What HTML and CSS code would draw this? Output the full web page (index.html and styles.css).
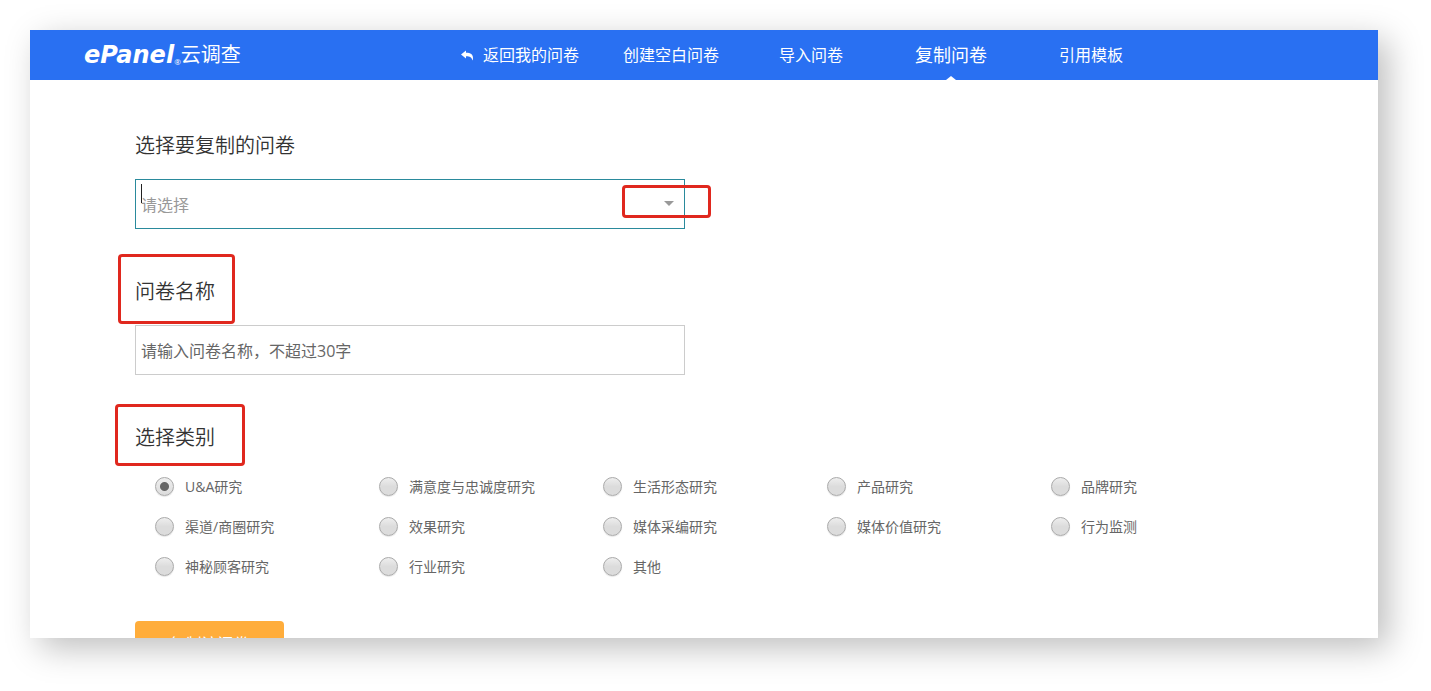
FILE: index.html
```html
<!DOCTYPE html>
<html lang="zh-CN">
<head>
<meta charset="utf-8">
<title>复制问卷 - ePanel云调查</title>
<link rel="stylesheet" href="styles.css">
</head>
<body>
<div class="window">
  <header class="topbar">
    <a class="logo" href="#"><span class="logo-en">ePanel</span><span class="logo-reg">®</span><span class="logo-cn">云调查</span></a>
    <nav class="nav">
      <a class="nav-item nav-back" href="#"><svg class="back-icon" viewBox="0 0 13 11" aria-hidden="true"><path d="M0 4.500 5 .5v2.300c4.700 0 7 1.700 7 5.200 0 1-.2 1.900-.6 2.500C10.800 7.500 9 6.200 5 6.200v2.300z"/></svg>返回我的问卷</a>
      <a class="nav-item" href="#">创建空白问卷</a>
      <a class="nav-item" href="#">导入问卷</a>
      <a class="nav-item nav-active" href="#">复制问卷</a>
      <a class="nav-item" href="#">引用模板</a>
    </nav>
  </header>
  <form class="form">
    <div class="field">
      <label class="title" for="source">选择要复制的问卷</label>
      <div class="select-box">
        <select class="control select" id="source"><option>请选择</option></select>
        <span class="caret"></span>
        <span class="arrow"></span>
        <span class="mark mark-arrow"></span>
      </div>
    </div>
    <div class="field">
      <label class="title" for="name">问卷名称<span class="mark mark-name"></span></label>
      <input class="control" id="name" type="text" placeholder="请输入问卷名称，不超过30字">
    </div>
    <fieldset class="field category">
      <legend class="title">选择类别<span class="mark mark-category"></span></legend>
      <div class="options">
        <label class="option"><input class="radio" type="radio" name="category" checked>U&amp;A研究</label>
        <label class="option"><input class="radio" type="radio" name="category">满意度与忠诚度研究</label>
        <label class="option"><input class="radio" type="radio" name="category">生活形态研究</label>
        <label class="option"><input class="radio" type="radio" name="category">产品研究</label>
        <label class="option"><input class="radio" type="radio" name="category">品牌研究</label>
        <label class="option"><input class="radio" type="radio" name="category">渠道/商圈研究</label>
        <label class="option"><input class="radio" type="radio" name="category">效果研究</label>
        <label class="option"><input class="radio" type="radio" name="category">媒体采编研究</label>
        <label class="option"><input class="radio" type="radio" name="category">媒体价值研究</label>
        <label class="option"><input class="radio" type="radio" name="category">行为监测</label>
        <label class="option"><input class="radio" type="radio" name="category">神秘顾客研究</label>
        <label class="option"><input class="radio" type="radio" name="category">行业研究</label>
        <label class="option"><input class="radio" type="radio" name="category">其他</label>
      </div>
    </fieldset>
    <button class="submit" type="button">复制该问卷</button>
  </form>
</div>
</body>
</html>
```
FILE: styles.css
```css
* {
  box-sizing: border-box;
}

body {
  display: flex;
  height: 100vh;
  margin: 0;
  padding: 30px 53px 53px 30px;
  background: #fff;
  color: #333;
  font-family: "Open Sans", "Noto Sans CJK SC", sans-serif;
  font-size: 16px;
}

.window {
  flex: 1;
  overflow: hidden;
  background: #fff;
  box-shadow: 10px 10px 32px rgba(0, 0, 0, 0.26);
}

.topbar {
  display: flex;
  height: 50px;
  padding-left: 54px;
  background: #2970f2;
}

.logo {
  display: flex;
  align-items: center;
  width: 377px;
  color: #fff;
  line-height: 50px;
  text-decoration: none;
}

.logo-en {
  font-family: "DejaVu Sans", sans-serif;
  font-size: 24px;
  font-style: italic;
  font-weight: 700;
}

.logo-reg {
  align-self: flex-end;
  font-size: 8px;
  line-height: 36px;
}

.logo-cn {
  font-size: 20px;
}

.nav {
  display: flex;
}

.nav-item {
  position: relative;
  width: 140px;
  color: #fff;
  line-height: 50px;
  text-align: center;
  text-decoration: none;
}

.nav-back {
  display: flex;
  align-items: center;
}

.back-icon {
  width: 13px;
  height: 11px;
  margin-right: 9px;
  fill: #fff;
}

.nav-active {
  font-size: 18px;
}

.nav-active::after {
  content: "";
  position: absolute;
  bottom: 0;
  left: 65px;
  border: 5px solid transparent;
  border-top: 0;
  border-bottom: 4px solid #fff;
}

.form {
  padding: 51px 105px 0;
}

.field {
  margin: 0 0 48px;
  padding: 0;
  border: 0;
}

.title {
  position: relative;
  display: block;
  width: fit-content;
  padding: 0 0 18px;
  font-size: 20px;
  font-weight: 350;
  line-height: 30px;
}

.select-box {
  position: relative;
  width: 550px;
}

.control {
  display: block;
  width: 550px;
  height: 50px;
  padding: 2px 5px 0;
  border: 1px solid #ccc;
  border-radius: 0;
  outline: 0;
  background: #fff;
  color: #666;
  font: inherit;
}

.control::placeholder {
  color: #666;
}

.select {
  appearance: none;
  border-color: #2a8a9c;
  color: #999;
}

.caret {
  position: absolute;
  top: 5px;
  left: 6px;
  width: 1px;
  height: 19px;
  background: #222;
}

.arrow {
  position: absolute;
  top: 22px;
  right: 11px;
  border: 5px solid transparent;
  border-top-color: #999;
  border-bottom: 0;
}

.mark {
  position: absolute;
  border: 3px solid #e0281e;
  border-radius: 4px;
  pointer-events: none;
}

.mark-arrow {
  top: 6px;
  right: -26px;
  width: 89px;
  height: 33px;
}

.mark-name {
  top: -23px;
  left: -17px;
  width: 117px;
  height: 70px;
}

.mark-category {
  top: -19px;
  left: -20px;
  width: 130px;
  height: 62px;
}

.category {
  margin-bottom: 35px;
}

.category .title {
  padding-bottom: 13px;
}

.options {
  display: grid;
  grid-template-columns: repeat(5, 224px);
  grid-auto-rows: 40px;
  padding-left: 20px;
}

.option {
  display: flex;
  align-items: center;
  height: 40px;
  gap: 11px;
  color: #666;
  font-size: 14px;
}

.radio {
  appearance: none;
  width: 19px;
  height: 19px;
  margin: 0;
  border: 1px solid #aaa;
  border-radius: 50%;
  background: linear-gradient(#eee, #dcdcdc 50%, #dcdcdc);
  box-shadow: 0 1px 1px rgba(0, 0, 0, 0.1);
}

.radio:checked {
  background: radial-gradient(circle, #666 4px, transparent 5px), linear-gradient(#eee, #dcdcdc);
}

.submit {
  width: 149px;
  height: 44px;
  padding: 0;
  border: 0;
  border-radius: 4px;
  background: #ffad3b;
  color: #fff;
  font: inherit;
}
```
